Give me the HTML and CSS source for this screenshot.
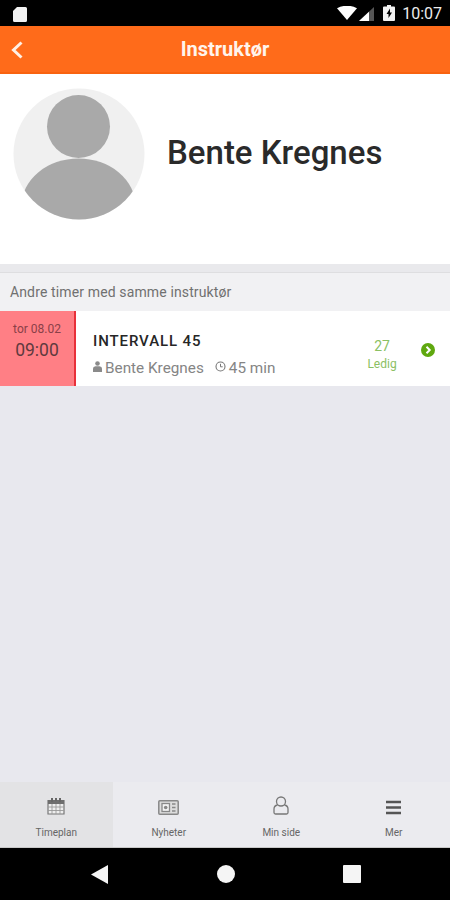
FILE: index.html
```html
<!DOCTYPE html>
<html lang="no">
<head>
<meta charset="utf-8">
<title>Instruktør</title>
<link rel="stylesheet" href="styles.css">
</head>
<body>
<div class="app">
  <div class="statusbar">
    <svg class="sd" width="14" height="15" viewBox="0 0 14 15"><path d="M4 0h8.500A1.500 1.500 0 0 1 14 1.500v12a1.500 1.500 0 0 1-1.500 1.500h-11A1.500 1.500 0 0 1 0 13.500V4z" fill="#f2f2f2"/></svg>
    <div class="status-right">
      <svg width="20" height="14" viewBox="0 0 20 14"><path d="M0 2.200Q10-2.800 20 2.200L10 14z" fill="#fff"/></svg>
      <svg class="signal" width="15" height="14" viewBox="0 0 15 14"><path d="M15 0v14H0z" fill="#555"/><path d="M10 4.700V14H0z" fill="#fff"/></svg>
      <svg class="battery" width="12" height="16" viewBox="0 0 12 16"><path d="M4 0h4v1.500h3a1 1 0 0 1 1 1V15a1 1 0 0 1-1 1H1a1 1 0 0 1-1-1V2.500a1 1 0 0 1 1-1h3z" fill="#f2f2f2"/><path d="M7 3.500 3.500 9h2v4L9 7.500H7z" fill="#000"/></svg>
      <span class="clock">10:07</span>
    </div>
  </div>
  <header class="topbar">
    <svg class="back" width="14" height="20" viewBox="0 0 14 20"><path d="M11.500 2.500 3.500 10l8 7.500" fill="none" stroke="#fff0e6" stroke-width="3"/></svg>
    <h1 class="title">Instruktør</h1>
  </header>
  <section class="profile">
    <svg class="avatar" width="132" height="132" viewBox="0 0 132 132">
      <defs><clipPath id="avatar-clip"><circle cx="66" cy="66" r="65.500"/></clipPath></defs>
      <circle cx="66" cy="66" r="65.500" fill="#f0f0f0"/>
      <circle cx="65.500" cy="38.500" r="31.500" fill="#a9a9a9"/>
      <ellipse cx="65.500" cy="118" rx="57" ry="47.500" fill="#a9a9a9" clip-path="url(#avatar-clip)"/>
    </svg>
    <h2 class="name">Bente Kregnes</h2>
  </section>
  <div class="section-head">Andre timer med samme instruktør</div>
  <article class="lesson">
    <div class="when">
      <span class="date">tor 08.02</span>
      <span class="time">09:00</span>
    </div>
    <div class="info">
      <div class="lesson-title">INTERVALL 45</div>
      <div class="meta">
        <svg class="person-icon" width="9" height="11" viewBox="0 0 9 11"><circle cx="4.500" cy="2.500" r="2.300" fill="#8a8a8a"/><path d="M0 11V7.500Q0 5.500 2.500 5.200h4Q9 5.500 9 7.500V11z" fill="#8a8a8a"/></svg>
        <span class="meta-text">Bente Kregnes</span>
        <svg class="clock-icon" width="11" height="11" viewBox="0 0 11 11"><circle cx="5.500" cy="5.500" r="4.500" fill="none" stroke="#777" stroke-width="1.100"/><path d="M5.500 2.800v3h2.200" fill="none" stroke="#777"/></svg>
        <span class="meta-text">45 min</span>
      </div>
    </div>
    <div class="avail">
      <span class="count">27</span>
      <span class="free">Ledig</span>
    </div>
    <svg class="go" width="14" height="14" viewBox="0 0 14 14"><circle cx="7" cy="7" r="7" fill="#5fa80f"/><path d="M5.500 3.800 8.700 7l-3.200 3.200" fill="none" stroke="#fff" stroke-width="2"/></svg>
  </article>
  <div class="spacer"></div>
  <nav class="tabs">
    <div class="tab tab-active">
      <svg width="18" height="18" viewBox="0 0 18 18"><path d="M1 3.500h16V17H1z" fill="#eee" stroke="#777" stroke-width="1.200"/><path d="M1 3h16v4H1z" fill="#6e6e6e"/><path d="M5 1v4M13 1v4M9 1v3" stroke="#666" stroke-width="2"/><path d="M1 10h16M1 13.500h16M5 7v10M9 7v10M13 7v10" stroke="#999" stroke-width=".9"/></svg>
      <span class="tab-label">Timeplan</span>
    </div>
    <div class="tab">
      <svg width="21" height="15" viewBox="0 0 21 15"><rect x=".8" y=".8" width="19.400" height="13.400" rx="1" fill="#ddd" stroke="#888" stroke-width="1.500"/><rect x="4" y="3.500" width="7.500" height="8" fill="#f3f3f3" stroke="#888" stroke-width="1.300"/><circle cx="7.700" cy="7.500" r="1.800" fill="#888"/><path d="M14 4h3.500M14 7.500h3.500M14 11h3.500" stroke="#888" stroke-width="1.500"/></svg>
      <span class="tab-label">Nyheter</span>
    </div>
    <div class="tab">
      <svg width="16" height="19" viewBox="0 0 16 19"><circle cx="8" cy="5.500" r="4.500" fill="none" stroke="#777" stroke-width="1.300"/><path d="M4.500 9C2 9.500 1 11 1 13v3.500q0 1.500 1.500 1.500h11q1.500 0 1.500-1.500V13c0-2-1-3.500-3.500-4" fill="none" stroke="#777" stroke-width="1.300"/></svg>
      <span class="tab-label">Min side</span>
    </div>
    <div class="tab">
      <svg width="15" height="15" viewBox="0 0 15 15"><path d="M0 2h15M0 7.500h15M0 13h15" stroke="#555" stroke-width="2.400"/></svg>
      <span class="tab-label">Mer</span>
    </div>
  </nav>
  <div class="navbar">
    <svg width="17" height="19" viewBox="0 0 17 19"><path d="M17 0v19L0 9.500z" fill="#f5f5f5"/></svg>
    <svg width="18" height="18" viewBox="0 0 18 18"><circle cx="9" cy="9" r="9" fill="#f5f5f5"/></svg>
    <svg width="18" height="18" viewBox="0 0 18 18"><rect width="18" height="18" rx="1" fill="#f5f5f5"/></svg>
  </div>
</div>
</body>
</html>
```
FILE: styles.css
```css
* { box-sizing: border-box; }
html, body { margin: 0; padding: 0; }
body { font-family: Roboto, "Liberation Sans", sans-serif; background: #e8e8ee; }
.app { width: 450px; height: 900px; display: flex; flex-direction: column; overflow: hidden; }

.statusbar { height: 26px; background: #000; display: flex; align-items: center; justify-content: space-between; padding: 0 8px 0 13px; }
.sd { margin-top: 3px; }
.status-right { display: flex; align-items: center; }
.signal { margin-left: 2px; margin-top: 1px; }
.battery { margin-left: 9px; }
.clock { color: #ececec; font-size: 16px; margin-left: 7px; }

.topbar { height: 48px; background: #ff6b1a; border-bottom: 2px solid #f9630f; position: relative; display: flex; align-items: center; justify-content: center; }
.back { position: absolute; left: 10px; top: 14px; }
.title { margin: 0; color: #fff4ec; font-size: 20px; font-weight: 700; }

.profile { height: 190px; background: #fff; display: flex; align-items: flex-start; padding: 14px 0 0 13px; }
.avatar { flex: none; }
.name { margin: 44px 0 0 22px; font-size: 33px; line-height: 42px; font-weight: 500; color: #2a2a2a; }

.section-head { height: 47px; padding: 20px 0 0 10px; font-size: 14px; line-height: 17px; letter-spacing: .13px; color: #707070; background: linear-gradient(#e9e9ec 0 8px, #dedee0 8px 9px, #f1f1f3 9px); }

.lesson { height: 75px; background: #fff; display: flex; align-items: stretch; }
.when { width: 76px; flex: none; background: #ff7f85; border-right: 2px solid #e8303a; display: flex; flex-direction: column; align-items: center; padding-top: 11px; }
.date { font-size: 12px; line-height: 14px; color: #8a4048; }
.time { font-size: 17.500px; line-height: 20px; margin-top: 4px; color: #5e3a3e; }
.info { flex: 1; padding: 21px 0 0 17px; }
.lesson-title { font-size: 15px; line-height: 18px; font-weight: 500; letter-spacing: .9px; color: #262626; }
.meta { display: flex; align-items: center; margin-top: 9px; height: 18px; }
.person-icon { margin-top: -4px; }
.meta-text { font-size: 15.300px; color: #858585; margin-left: 3px; }
.clock-icon { margin-left: 11px; margin-top: -4px; }
.avail { width: 50px; display: flex; flex-direction: column; align-items: center; padding-top: 27px; margin-right: 14px; }
.count { font-size: 14px; line-height: 16px; color: #8bc063; }
.free { font-size: 12px; line-height: 14px; margin-top: 3px; color: #8bc063; }
.go { margin: 32px 15px 0 0; flex: none; }

.spacer { flex: 1; }

.tabs { height: 66px; display: flex; background: #ebebef; border-bottom: 1px solid #c8c8c8; }
.tab { width: 112.500px; display: flex; flex-direction: column; align-items: center; justify-content: flex-end; padding-bottom: 8px; }
.tab-active { background: #e3e3e5; }
.tab-label { font-size: 10px; line-height: 12px; margin-top: 12px; color: #666; }

.navbar { height: 52px; background: #000; display: flex; align-items: center; padding: 0 89px 0 91px; justify-content: space-between; }
```
